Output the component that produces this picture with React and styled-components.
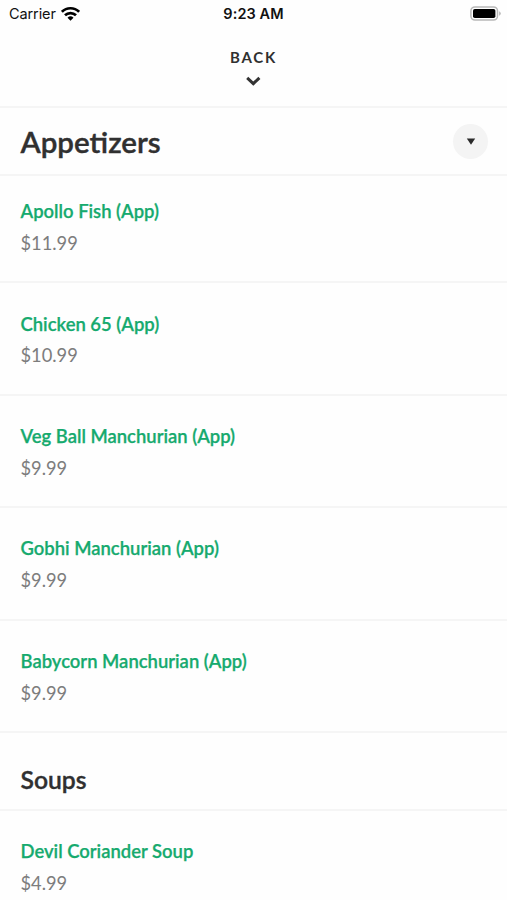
import React from 'react';
import styled, { createGlobalStyle } from 'styled-components';

const appetizers = [
    { name: 'Apollo Fish (App)', price: '$11.99' },
    { name: 'Chicken 65 (App)', price: '$10.99' },
    { name: 'Veg Ball Manchurian (App)', price: '$9.99' },
    { name: 'Gobhi Manchurian (App)', price: '$9.99' },
    { name: 'Babycorn Manchurian (App)', price: '$9.99' },
];

const soups = [
    { name: 'Devil Coriander Soup', price: '$4.99' },
];

function MenuItem({ name, price, first }) {
    return (
        <Item $first={first}>
            <ItemName>{name}</ItemName>
            <ItemPrice>{price}</ItemPrice>
        </Item>
    );
}

export default function App() {
    return (
        <Screen>
            <GlobalStyle />
            <StatusBar>
                <Carrier>
                    Carrier
                    <svg width="19" height="15" viewBox="0 0 19 15" fill="none" stroke="#000" strokeWidth="2.7">
                        <path d="M0.9 5.8 A12.2 12.2 0 0 1 18.1 5.8" />
                        <path d="M4 9.3 A7.8 7.8 0 0 1 15 9.3" />
                        <path d="M9.5 14.7 L6.5 11.7 A4.3 4.3 0 0 1 12.5 11.7 Z" fill="#000" stroke="none" />
                    </svg>
                </Carrier>
                <Time>9:23 AM</Time>
                <Battery>
                    <svg width="31" height="15" viewBox="0 0 31 15">
                        <rect x="0.9" y="0.9" width="26.6" height="13.2" rx="4" fill="#fff" stroke="#b8b8b8" strokeWidth="1.5" />
                        <rect x="3" y="3" width="22.4" height="9" rx="1.8" fill="#000" />
                        <path d="M29.1 5.3 Q30.8 6 30.8 7.5 Q30.8 9 29.1 9.7 Z" fill="#b8b8b8" />
                    </svg>
                </Battery>
            </StatusBar>
            <BackBar>
                BACK
                <svg width="16" height="10" viewBox="0 0 16 10" fill="none" stroke="#333" strokeWidth="3">
                    <path d="M1.2 1.9 L7.3 7.6 L13.4 1.9" />
                </svg>
            </BackBar>
            <CategoryBar>
                <CategoryTitle>Appetizers</CategoryTitle>
                <DropdownButton>
                    <svg width="10" height="7" viewBox="0 0 10 7">
                        <path d="M0.8 0.4 H9.2 L5 6.8 Z" fill="#2b2b2b" />
                    </svg>
                </DropdownButton>
            </CategoryBar>
            {appetizers.map((item, i) => (
                <MenuItem key={item.name} name={item.name} price={item.price} first={i === 0} />
            ))}
            <SectionTitle>Soups</SectionTitle>
            {soups.map((item) => (
                <MenuItem key={item.name} name={item.name} price={item.price} />
            ))}
        </Screen>
    );
}

const GlobalStyle = createGlobalStyle`
    * {
        box-sizing: border-box;
    }

    body {
        margin: 0;
        background-color: #fefefe;
        overflow: hidden;
    }
`;

const Screen = styled.div`
    width: 100%;
    height: 900px;
    overflow: hidden;
    color: #303030;
    background-color: #fefefe;
    font-family: Lato, sans-serif;
`;

const StatusBar = styled.div`
    display: grid;
    grid-template-columns: 1fr auto 1fr;
    align-items: center;
    height: 27px;
    padding: 0 6px 0 9px;
    color: #111;
    font-family: Inter, sans-serif;
    font-size: 14.5px;
`;

const Carrier = styled.div`
    display: flex;
    align-items: center;
    gap: 5px;
    letter-spacing: -0.1px;

    svg {
        margin-bottom: 1px;
    }
`;

const Time = styled.div`
    padding-right: 3px;
    font-weight: 600;
    letter-spacing: 0.1px;
`;

const Battery = styled.div`
    display: flex;
    justify-content: flex-end;
    padding-bottom: 1px;
`;

const BackBar = styled.div`
    display: flex;
    flex-direction: column;
    align-items: center;
    gap: 9px;
    height: 81px;
    padding-top: 20px;
    border-bottom: 2px solid #f5f5f5;
    font-size: 15px;
    font-weight: 700;
    line-height: 20px;
    letter-spacing: 1.8px;
`;

const CategoryBar = styled.div`
    display: flex;
    justify-content: space-between;
    align-items: center;
    height: 68px;
    padding: 0 19px 0 20.5px;
    border-bottom: 2px solid #f5f5f5;
`;

const CategoryTitle = styled.h1`
    margin: 0;
    padding-top: 2px;
    font-size: 29.5px;
    font-weight: 600;
    line-height: 36px;
    -webkit-text-stroke: 0.4px;
`;

const DropdownButton = styled.button`
    display: flex;
    justify-content: center;
    align-items: center;
    width: 35px;
    height: 35px;
    padding: 0;
    border: none;
    border-radius: 50%;
    background-color: #f4f4f4;
`;

const Item = styled.div`
    height: ${(props) => (props.$first ? '107.4px' : '112.4px')};
    padding: ${(props) => (props.$first ? '22px' : '27.3px')} 20.5px 0;
    border-bottom: 2px solid #f5f5f5;
`;

const ItemName = styled.div`
    color: #16aa6e;
    font-size: 18.45px;
    font-weight: 600;
    line-height: 26px;
    -webkit-text-stroke: 0.25px;
`;

const ItemPrice = styled.div`
    margin-top: 5.7px;
    color: #7d7d7d;
    font-size: 18.3px;
    line-height: 26px;
`;

const SectionTitle = styled.h2`
    height: 78px;
    margin: 0;
    padding: 31px 20.5px 0;
    border-bottom: 2px solid #f5f5f5;
    font-size: 24.7px;
    font-weight: 600;
    line-height: 32px;
    -webkit-text-stroke: 0.35px;
`;
